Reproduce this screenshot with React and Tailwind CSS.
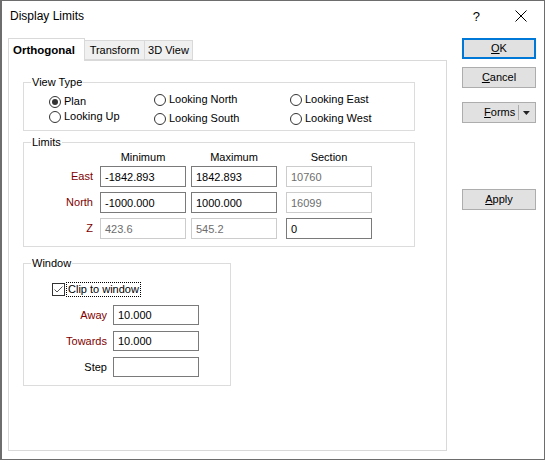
import React from 'react';

function Radio({ label, checked }) {
  return (
    <label className="flex items-center gap-[3px] h-[15px] whitespace-nowrap">
      <span className="w-[12px] h-[12px] rounded-full border border-[#333333] bg-white flex items-center justify-center">
        {checked && <span className="w-[6px] h-[6px] rounded-full bg-[#333333]" />}
      </span>
      <span>{label}</span>
    </label>
  );
}

function Field({ value, disabled, width = 'w-[86px]', height = 'h-[21px]' }) {
  return (
    <input
      readOnly
      defaultValue={value}
      className={`${width} ${height} border bg-white pl-[4px] outline-none ${
        disabled ? 'border-[#cccccc] text-[#6d6d6d]' : 'border-[#7a7a7a] text-black'
      }`}
    />
  );
}

function Button({ children, primary, className = '' }) {
  return (
    <button
      className={`h-[21px] w-[74px] flex items-center justify-center bg-[#e1e1e1] ${
        primary ? 'border-2 border-[#0078d7]' : 'border border-[#adadad]'
      } ${className}`}
    >
      {children}
    </button>
  );
}

const LIMITS = [
  { label: 'East', min: '-1842.893', max: '1842.893', section: '10760', zRow: false },
  { label: 'North', min: '-1000.000', max: '1000.000', section: '16099', zRow: false },
  { label: 'Z', min: '423.6', max: '545.2', section: '0', zRow: true },
];

const WINDOW_ROWS = [
  { label: 'Away', value: '10.000', red: true },
  { label: 'Towards', value: '10.000', red: true },
  { label: 'Step', value: '', red: false },
];

export default function App() {
  return (
    <div className="w-[545px] h-[460px] bg-white border border-l-2 border-[#6d6d6d] flex flex-col text-[11px] leading-[15px] text-black font-['Liberation_Sans',Arial,sans-serif]">
      {/* Title bar */}
      <div className="h-[30px] flex items-center pl-[8px] pr-[17px] text-[12px]">
        <span>Display Limits</span>
        <span className="ml-auto mr-[35px] text-[13px]">?</span>
        <svg width="12" height="12" viewBox="0 0 12 12" className="text-black">
          <path d="M0.5 0.5 L11.5 11.5 M11.5 0.5 L0.5 11.5" stroke="currentColor" strokeWidth="1" />
        </svg>
      </div>

      <div className="flex pt-[7px] pl-[6px]">
        {/* Tabs + panel */}
        <div className="w-[439px] flex flex-col">
          <div className="flex items-end h-[22px]">
            <div className="relative z-10 -mb-px h-[23px] w-[77px] bg-white border border-b-0 border-[#d9d9d9] flex items-center pl-[4px] font-bold text-[11.5px]">
              Orthogonal
            </div>
            <div className="h-[20px] w-[60px] bg-[#f0f0f0] border border-l-0 border-[#d9d9d9] flex items-center justify-center">
              Transform
            </div>
            <div className="h-[20px] w-[48px] bg-[#f0f0f0] border border-l-0 border-[#d9d9d9] flex items-center justify-center">
              3D View
            </div>
          </div>

          <div className="h-[391px] border border-[#d9d9d9] bg-white pl-[14px] pt-[14px] flex flex-col">
            {/* View Type */}
            <fieldset className="w-[392px] border border-[#dcdcdc]">
              <legend className="ml-[7px] px-[1px]">View Type</legend>
              <div className="flex h-[40px] pl-[25px]">
                <div className="w-[105px] pt-[4px] flex flex-col">
                  <Radio label="Plan" checked />
                  <Radio label="Looking Up" />
                </div>
                <div className="w-[136px] pt-[2px] flex flex-col gap-[4px]">
                  <Radio label="Looking North" />
                  <Radio label="Looking South" />
                </div>
                <div className="pt-[2px] flex flex-col gap-[4px]">
                  <Radio label="Looking East" />
                  <Radio label="Looking West" />
                </div>
              </div>
            </fieldset>

            {/* Limits */}
            <fieldset className="mt-[4px] w-[392px] border border-[#dcdcdc] pb-[7px]">
              <legend className="ml-[7px] px-[1px]">Limits</legend>
              <div className="flex h-[15px] mb-[1px]">
                <div className="w-[76px]" />
                <div className="w-[86px] text-center">Minimum</div>
                <div className="w-[86px] ml-[5px] text-center">Maximum</div>
                <div className="w-[86px] ml-[9px] text-center">Section</div>
              </div>
              <div className="flex flex-col gap-[5px]">
                {LIMITS.map((r) => (
                  <div key={r.label} className="flex items-center h-[21px]">
                    <div className="w-[76px] pr-[7px] text-right text-[#800000]">{r.label}</div>
                    <Field value={r.min} disabled={r.zRow} />
                    <div className="ml-[5px]">
                      <Field value={r.max} disabled={r.zRow} />
                    </div>
                    <div className="ml-[9px]">
                      <Field value={r.section} disabled={!r.zRow} />
                    </div>
                  </div>
                ))}
              </div>
            </fieldset>

            {/* Window */}
            <fieldset className="mt-[9px] w-[208px] border border-[#dcdcdc] pt-[11px] pb-[8px]">
              <legend className="ml-[7px] px-[1px]">Window</legend>
              <div className="flex items-center h-[15px] pl-[28px] gap-[1px]">
                <span className="w-[13px] h-[13px] border border-[#333333] bg-white flex items-center justify-center">
                  <svg width="11" height="11" viewBox="0 0 11 11">
                    <path d="M1.5 5.5 L4 8 L9.5 2.5" fill="none" stroke="#555555" strokeWidth="1" />
                  </svg>
                </span>
                <span className="border border-dotted border-black px-[1px] leading-[13px]">Clip to window</span>
              </div>
              <div className="mt-[8px] flex flex-col gap-[6px]">
                {WINDOW_ROWS.map((r) => (
                  <div key={r.label} className="flex items-center h-[20px]">
                    <div className={`w-[89px] pr-[6px] text-right ${r.red ? 'text-[#800000]' : 'text-black'}`}>
                      {r.label}
                    </div>
                    <Field value={r.value} height="h-[20px]" />
                  </div>
                ))}
              </div>
            </fieldset>
          </div>
        </div>

        {/* Buttons */}
        <div className="ml-[15px] flex flex-col">
          <Button primary>
            <span><span className="underline">O</span>K</span>
          </Button>
          <Button className="mt-[8px]">
            <span><span className="underline">C</span>ancel</span>
          </Button>
          <button className="mt-[14px] h-[21px] w-[74px] flex items-center bg-[#e1e1e1] border border-[#adadad]">
            <span className="w-[55px] text-right pr-[2px]">
              <span className="underline">F</span>orms
            </span>
            <span className="h-[15px] w-px bg-[#adadad] ml-[1px]" />
            <svg width="16" height="8" viewBox="0 0 16 8">
              <path d="M4 2 L11 2 L7.5 6 Z" fill="#222222" />
            </svg>
          </button>
          <Button className="mt-[66px]">
            <span><span className="underline">A</span>pply</span>
          </Button>
        </div>
      </div>
    </div>
  );
}
